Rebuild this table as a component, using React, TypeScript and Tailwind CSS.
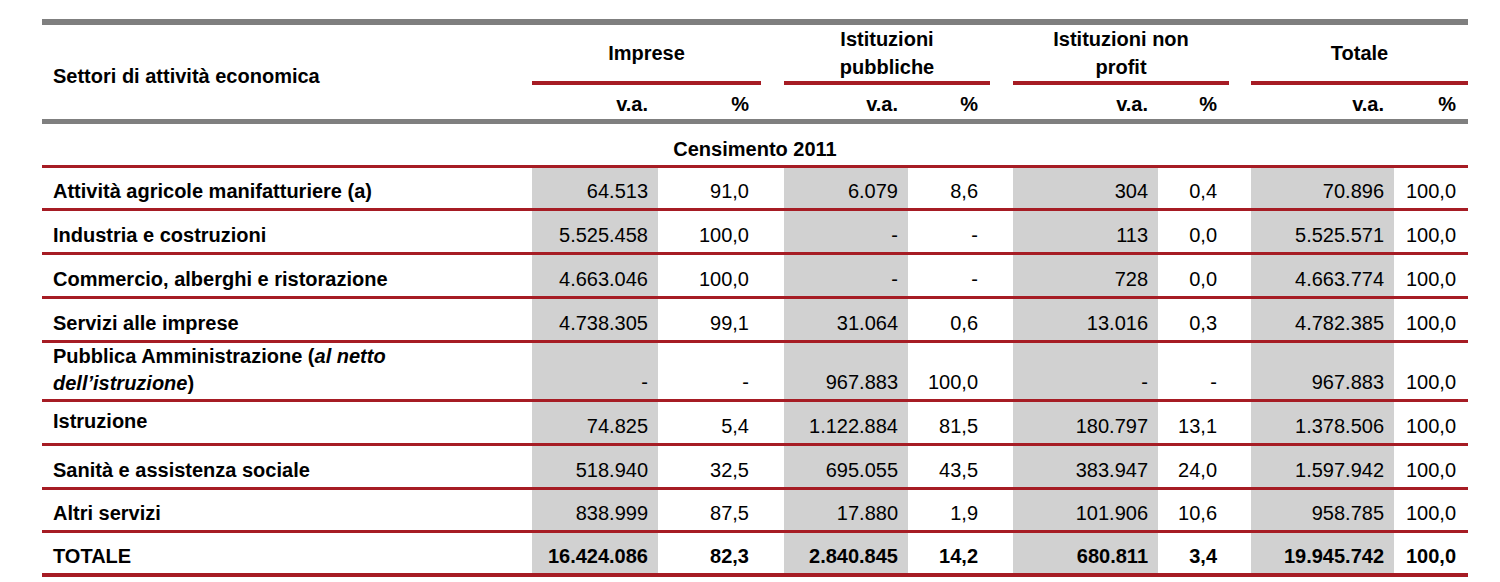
import React from "react";

type Row = {
  label: React.ReactNode;
  values: string[];
  h: string;
  bold?: boolean;
  labelCls?: string;
  last?: boolean;
};

const rows: Row[] = [
  {
    label: "Attività agricole manifatturiere (a)",
    values: ["64.513", "91,0", "6.079", "8,6", "304", "0,4", "70.896", "100,0"],
    h: "h-[43px]",
  },
  {
    label: "Industria e costruzioni",
    values: ["5.525.458", "100,0", "-", "-", "113", "0,0", "5.525.571", "100,0"],
    h: "h-[44px]",
  },
  {
    label: "Commercio, alberghi e ristorazione",
    values: ["4.663.046", "100,0", "-", "-", "728", "0,0", "4.663.774", "100,0"],
    h: "h-[44px]",
  },
  {
    label: "Servizi alle imprese",
    values: ["4.738.305", "99,1", "31.064", "0,6", "13.016", "0,3", "4.782.385", "100,0"],
    h: "h-[44px]",
  },
  {
    label: (
      <>
        Pubblica Amministrazione (<i>al netto</i>
        <br />
        <i>dell’istruzione</i>)
      </>
    ),
    values: ["-", "-", "967.883", "100,0", "-", "-", "967.883", "100,0"],
    h: "h-[58px]",
    labelCls: "leading-[27px] pb-[2px]",
  },
  {
    label: "Istruzione",
    values: ["74.825", "5,4", "1.122.884", "81,5", "180.797", "13,1", "1.378.506", "100,0"],
    h: "h-[44px]",
    labelCls: "pb-[8px]",
  },
  {
    label: "Sanità e assistenza sociale",
    values: ["518.940", "32,5", "695.055", "43,5", "383.947", "24,0", "1.597.942", "100,0"],
    h: "h-[44px]",
  },
  {
    label: "Altri servizi",
    values: ["838.999", "87,5", "17.880", "1,9", "101.906", "10,6", "958.785", "100,0"],
    h: "h-[43px]",
  },
  {
    label: "TOTALE",
    values: ["16.424.086", "82,3", "2.840.845", "14,2", "680.811", "3,4", "19.945.742", "100,0"],
    h: "h-[44px]",
    bold: true,
    last: true,
  },
];

const groups = [
  { title: <>Imprese</> },
  { title: <>Istituzioni<br />pubbliche</> },
  { title: <>Istituzioni non<br />profit</> },
  { title: <>Totale</> },
];

function DataRow({ row }: { row: Row }) {
  const line = row.last
    ? "border-b-[4px] border-b-[#a61c24]"
    : "border-b-[3px] border-b-[#a61c24]";
  const cells: React.ReactNode[] = [];
  for (let g = 0; g < 4; g++) {
    cells.push(
      <td key={`va${g}`} className={`bg-[#d1d1d1] text-right pr-[10px] align-bottom pb-[3px] ${line}`}>
        {row.values[g * 2]}
      </td>
    );
    cells.push(
      <td key={`p${g}`} className={`text-right pr-[12px] align-bottom pb-[3px] ${line}`}>
        {row.values[g * 2 + 1]}
      </td>
    );
    if (g < 3) cells.push(<td key={`gap${g}`} className={line} />);
  }
  return (
    <tr className={`${row.h} ${row.bold ? "font-bold" : ""}`}>
      <td className={`pl-[11px] font-bold align-bottom ${line} ${row.labelCls ?? "pb-[3px]"}`}>
        {row.label}
      </td>
      {cells}
    </tr>
  );
}

export default function App() {
  return (
    <div className="bg-white pt-[19px] pl-[42px]">
      <table className="w-[1426px] table-fixed border-separate border-spacing-0 font-['Liberation_Sans',Arial,sans-serif] text-[20px] leading-[28px] text-black">
        <colgroup>
          <col className="w-[490px]" />
          <col className="w-[126px]" />
          <col className="w-[103px]" />
          <col className="w-[23px]" />
          <col className="w-[124px]" />
          <col className="w-[82px]" />
          <col className="w-[23px]" />
          <col className="w-[145px]" />
          <col className="w-[71px]" />
          <col className="w-[22px]" />
          <col className="w-[143px]" />
          <col className="w-[74px]" />
        </colgroup>
        <thead>
          <tr className="h-[66px]">
            <td
              rowSpan={2}
              className="pl-[11px] pt-[7px] align-middle font-bold border-t-[6px] border-t-[#7f7f7f] border-b-[5px] border-b-[#7f7f7f]"
            >
              Settori di attività economica
            </td>
            {groups.map((g, i) => (
              <React.Fragment key={i}>
                <td
                  colSpan={2}
                  className="text-center align-middle font-bold leading-[28px] border-t-[6px] border-t-[#7f7f7f] border-b-[4px] border-b-[#a61c24]"
                >
                  {g.title}
                </td>
                {i < 3 && (
                  <td
                    rowSpan={2}
                    className="border-t-[6px] border-t-[#7f7f7f] border-b-[5px] border-b-[#7f7f7f]"
                  />
                )}
              </React.Fragment>
            ))}
          </tr>
          <tr className="h-[39px]">
            {groups.map((_, i) => (
              <React.Fragment key={i}>
                <td className="text-right pr-[10px] align-bottom pb-[1px] font-bold border-b-[5px] border-b-[#7f7f7f]">
                  v.a.
                </td>
                <td className="text-right pr-[12px] align-bottom pb-[1px] font-bold border-b-[5px] border-b-[#7f7f7f]">
                  %
                </td>
              </React.Fragment>
            ))}
          </tr>
        </thead>
        <tbody>
          <tr className="h-[44px]">
            <td
              colSpan={12}
              className="text-center align-bottom pb-[2px] font-bold border-b-[3px] border-b-[#a61c24]"
            >
              Censimento 2011
            </td>
          </tr>
          {rows.map((r, i) => (
            <DataRow key={i} row={r} />
          ))}
        </tbody>
      </table>
    </div>
  );
}
